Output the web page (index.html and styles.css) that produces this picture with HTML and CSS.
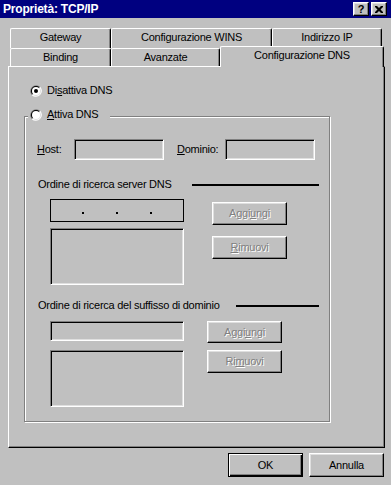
FILE: index.html
```html
<!DOCTYPE html>
<html>
<head>
<meta charset="utf-8">
<link rel="stylesheet" href="styles.css">
</head>
<body>
<div class="window">
  <div class="titlebar">
    <span class="title">Proprietà: TCP/IP</span>
    <div class="tbtns">
      <span class="tbtn">?</span>
      <span class="tbtn"><svg width="8" height="7" viewBox="0 0 8 7"><path d="M0 0h2l2 2 2-2h2v1l-2.5 2.5L8 6v1H6L4 5 2 7H0V6l2.5-2.5L0 1z" fill="#000"/></svg></span>
    </div>
  </div>

  <div class="tabs">
    <div class="tabrow back">
      <div class="tab w101">Gateway</div>
      <div class="tab w161">Configurazione WINS</div>
      <div class="tab w110">Indirizzo IP</div>
    </div>
    <div class="tabrow front">
      <div class="tab w101">Binding</div>
      <div class="tab w109">Avanzate</div>
      <div class="tab sel w164">Configurazione DNS</div>
    </div>
  </div>

  <div class="panel">
    <div class="radio r1">
      <svg width="12" height="12" viewBox="0 0 12 12"><path d="M1.76 10.24A6 6 0 0 1 10.24 1.76Z" fill="#808080"/><path d="M10.24 1.76A6 6 0 0 1 1.76 10.24Z" fill="#fff"/><path d="M2.46 9.54A5 5 0 0 1 9.54 2.46Z" fill="#000"/><path d="M9.54 2.46A5 5 0 0 1 2.46 9.54Z" fill="#dfdfdf"/><circle cx="6" cy="6" r="4" fill="#fff"/><circle cx="6" cy="6" r="2" fill="#000"/></svg>
      <span>Di<u>s</u>attiva DNS</span>
    </div>

    <div class="group">
      <div class="radio legend">
        <svg width="12" height="12" viewBox="0 0 12 12"><path d="M1.76 10.24A6 6 0 0 1 10.24 1.76Z" fill="#808080"/><path d="M10.24 1.76A6 6 0 0 1 1.76 10.24Z" fill="#fff"/><path d="M2.46 9.54A5 5 0 0 1 9.54 2.46Z" fill="#000"/><path d="M9.54 2.46A5 5 0 0 1 2.46 9.54Z" fill="#dfdfdf"/><circle cx="6" cy="6" r="4" fill="#fff"/></svg>
        <span><u>A</u>ttiva DNS</span>
      </div>

      <div class="hostrow">
        <span class="lbl-host"><u>H</u>ost:</span>
        <div class="field f90"></div>
        <span class="lbl-dom"><u>D</u>ominio:</span>
        <div class="field f90"></div>
      </div>

      <div class="seclabel">
        <span>Ordine di ricerca server DNS</span>
        <span class="rule rule1"></span>
      </div>

      <div class="sec sec1">
        <div class="col left">
          <div class="ipfield"><span class="dot"></span><span class="dot"></span><span class="dot"></span></div>
          <div class="field list"></div>
        </div>
        <div class="col right">
          <div class="btn dis">Aggi<u>u</u>ngi</div>
          <div class="btn dis"><u>R</u>imuovi</div>
        </div>
      </div>

      <div class="seclabel s2">
        <span>Ordine di ricerca del suffisso di dominio</span>
        <span class="rule rule2"></span>
      </div>

      <div class="sec sec2">
        <div class="col left">
          <div class="field f134"></div>
          <div class="field list"></div>
        </div>
        <div class="col right">
          <div class="btn dis h22">Aggi<u>u</u>ngi</div>
          <div class="btn dis">Ri<u>m</u>uovi</div>
        </div>
      </div>
    </div>
  </div>

  <div class="footer">
    <div class="btn big default">OK</div>
    <div class="btn big">Annulla</div>
  </div>
</div>
</body>
</html>
```

FILE: styles.css
```css
body {
  margin: 0;
  background: #c0c0c0;
  font: 11px/13px "Liberation Sans", Arial, sans-serif;
  letter-spacing: -0.25px;
  color: #000;
}

.window {
  width: 391px;
  height: 485px;
  overflow: hidden;
  background: #c0c0c0;
}

u { text-decoration: underline; text-underline-offset: 1px; }

/* title bar */
.titlebar {
  height: 18px;
  background: #000080;
  display: flex;
  align-items: center;
  justify-content: space-between;
  padding: 0 4px 0 3px;
  box-sizing: border-box;
}
.title {
  color: #fff;
  font-weight: bold;
  font-size: 12px;
  letter-spacing: -0.2px;
}
.tbtns { display: flex; gap: 2px; }
.tbtn {
  width: 16px;
  height: 14px;
  box-sizing: border-box;
  background: #c0c0c0;
  border: 1px solid;
  border-color: #fff #000 #000 #fff;
  box-shadow: inset -1px -1px #808080, inset 1px 1px #dfdfdf;
  display: flex;
  align-items: center;
  justify-content: center;
  font-weight: bold;
  font-size: 11px;
  letter-spacing: 0;
}

/* tabs */
.tabs { margin-top: 10px; padding-left: 10px; }
.tabrow { display: flex; }
.tabrow.back { height: 20px; }
.tabrow.front { height: 18px; }
.tab {
  box-sizing: border-box;
  height: 100%;
  border-top: 1px solid #fff;
  border-left: 1px solid #fff;
  border-right: 1px solid #000;
  box-shadow: inset -1px 0 #808080;
  border-radius: 2px 2px 0 0;
  text-align: center;
  line-height: 17px;
  background: #c0c0c0;
}
.tab.sel {
  margin-top: -2px;
  height: 21px;
  margin-bottom: -1px;
  position: relative;
  z-index: 1;
}
.w101 { width: 101px; }
.w109 { width: 109px; }
.w110 { width: 110px; }
.w161 { width: 161px; }
.w164 { width: 164px; }

/* panel */
.panel {
  margin-left: 8px;
  width: 377px;
  height: 382px;
  box-sizing: border-box;
  border: 1px solid;
  border-color: #fff #000 #000 #fff;
  box-shadow: inset -1px -1px #808080;
  padding: 17px 0 0 15px;
}

.radio {
  display: flex;
  align-items: center;
  gap: 5px;
  height: 13px;
}
.radio svg { flex: none; }
.r1 { margin-left: 6px; }

.group {
  margin-top: 19px;
  width: 306px;
  height: 306px;
  box-sizing: border-box;
  border: 1px solid #808080;
  box-shadow: 1px 1px 0 #fff, inset 1px 1px 0 #fff;
  position: relative;
  padding: 22px 0 0 12px;
}
.legend {
  position: absolute;
  top: -9px;
  left: 3px;
  background: #c0c0c0;
  padding: 0 12px 0 2px;
}

.hostrow {
  display: flex;
  align-items: center;
  height: 21px;
}
.lbl-host { width: 37px; }
.lbl-dom { margin-left: 13px; width: 48px; }

.field {
  box-sizing: border-box;
  border: 1px solid;
  border-color: #808080 #fff #fff #808080;
  box-shadow: inset 1px 1px #000, inset -1px -1px #dfdfdf;
  background: #c0c0c0;
}
.f90 { width: 90px; height: 21px; }
.f134 { width: 134px; height: 20px; }
.list { width: 134px; height: 57px; }

.seclabel {
  display: flex;
  align-items: center;
  justify-content: space-between;
  width: 282px;
  height: 13px;
  margin-top: 18px;
  padding-left: 1px;
  box-sizing: border-box;
}
.seclabel.s2 { margin-top: 14px; }
.rule { height: 2px; background: #000; }
.rule1 { width: 127px; }
.rule2 { width: 83px; }

.sec { display: flex; padding-left: 13px; margin-top: 8px; }
.sec2 { margin-top: 9px; }
.col { display: flex; flex-direction: column; }
.sec1 .left { gap: 6px; }
.sec1 .right { margin-left: 28px; padding-top: 3px; gap: 11px; }
.sec2 .left { gap: 9px; }
.sec2 .right { margin-left: 23px; gap: 7px; }

.ipfield {
  width: 134px;
  height: 23px;
  box-sizing: border-box;
  border: 1px solid #000;
  display: flex;
  align-items: flex-start;
  padding: 12px 0 0 31px;
  gap: 32px;
}
.dot { width: 2px; height: 2px; background: #000; }

/* buttons */
.btn {
  width: 75px;
  height: 23px;
  box-sizing: border-box;
  border: 1px solid;
  border-color: #fff #000 #000 #fff;
  box-shadow: inset -1px -1px #808080, inset 1px 1px #dfdfdf;
  display: flex;
  align-items: center;
  justify-content: center;
  background: #c0c0c0;
}
.btn.h22 { height: 22px; }
.btn.dis {
  color: #808080;
  text-shadow: 1px 1px 0 #fff;
}
.btn.big { height: 24px; }
.btn.default {
  border-color: #000;
  box-shadow: inset 1px 1px #fff, inset -1px -1px #000, inset -2px -2px #808080;
}

.footer {
  display: flex;
  justify-content: flex-end;
  gap: 6px;
  padding-right: 7px;
  margin-top: 5px;
}
```
